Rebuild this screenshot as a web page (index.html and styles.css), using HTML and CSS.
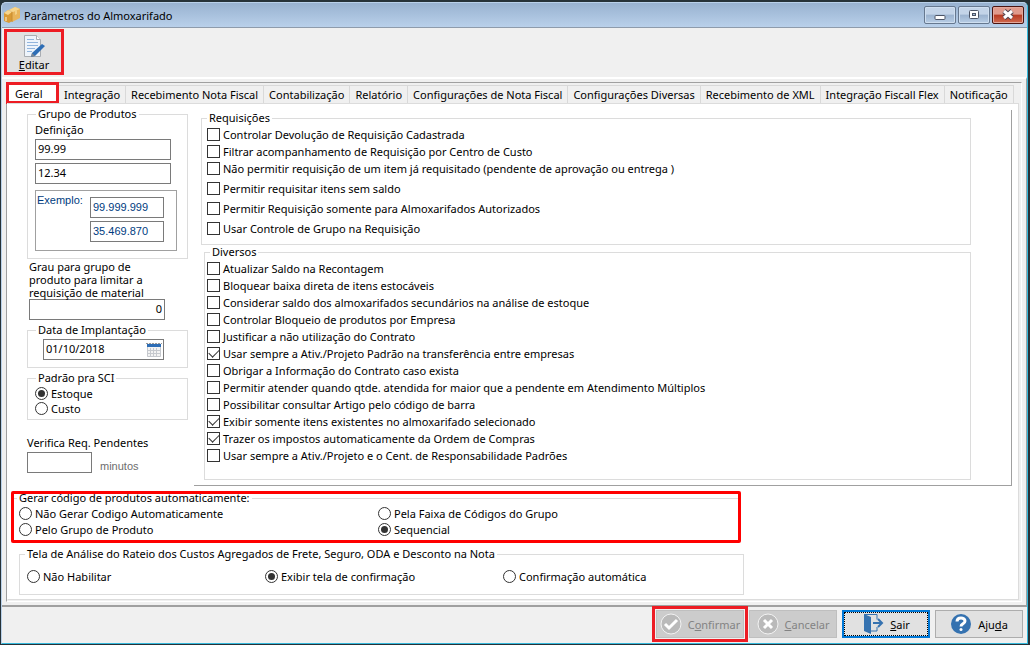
FILE: index.html
```html
<!DOCTYPE html>
<html lang="pt-BR">
<head>
  <meta charset="UTF-8">
  <meta name="viewport" content="width=device-width, initial-scale=1.0">
  <title>Parâmetros do Almoxarifado</title>
  <link rel="stylesheet" href="styles.css">
</head>
<body>
  <div class="window">
    <header class="titlebar">
      <svg class="app-icon" width="16" height="16" viewBox="0 0 16 16">
        <path d="M0 6l4-3 4 2v9l-3 2-5-2z" fill="#d99a35"/>
        <path d="M5 3l6-3 5 2v9l-8 4V5z" fill="#e9b45a"/>
        <path d="M0 6l4-3 4 2-4 3zM5 3l6-3 5 2-7 3z" fill="#f7d58c"/>
        <path d="M8 5v10" stroke="#c98c30" fill="none"/>
        <path d="M11 4v4l2-1V3" fill="#f3cf85"/>
        <path d="M1 11h2M1 13h2" stroke="#fff3d0"/>
      </svg>
      <h1>Parâmetros do Almoxarifado</h1>
      <div class="window-buttons">
        <button type="button" aria-label="Minimizar">
          <svg width="12" height="12" viewBox="0 0 12 12"><rect x="1" y="6.5" width="10" height="4" rx="1" fill="#fff" stroke="#4c5566"/></svg>
        </button>
        <button type="button" aria-label="Maximizar">
          <svg width="12" height="12" viewBox="0 0 12 12"><rect x="1.5" y="1.5" width="9" height="8" rx="1" fill="#fff" stroke="#4c5566"/><rect x="4.5" y="4.5" width="3" height="2" fill="#a9bfd8" stroke="#4c5566"/></svg>
        </button>
        <button type="button" class="close" aria-label="Fechar">
          <svg width="12" height="12" viewBox="0 0 12 12"><path d="M2 2l8 7M10 2l-8 7" stroke="#4c4450" stroke-width="5"/><path d="M2 2l8 7M10 2l-8 7" stroke="#fff" stroke-width="3"/></svg>
        </button>
      </div>
    </header>

    <div class="toolbar">
      <button type="button" class="edit-btn">
        <svg width="22" height="24" viewBox="0 0 22 24">
          <path d="M1.5 1.5h12l4 4v17h-16z" fill="#eef4fb" stroke="#a9adb2"/>
          <path d="M13.5 1.5v4h4" fill="#fff" stroke="#a9adb2"/>
          <path d="M4 5.5h7M4 8.5h11M4 11.500h11M4 14.5h8M4 17.5h5" stroke="#92b5dd"/>
          <path d="M19 10l3 2-10 10-4 1 1-4z" fill="#2d6db5"/>
          <path d="M8 23l1-4 3 3z" fill="#7b8592"/>
        </svg>
        <span><u>E</u>ditar</span>
      </button>
    </div>

    <main class="workspace">
      <div class="frame">
        <nav class="tabs">
          <button type="button" class="tab active">Geral</button>
          <button type="button" class="tab">Integração</button>
          <button type="button" class="tab">Recebimento Nota Fiscal</button>
          <button type="button" class="tab">Contabilização</button>
          <button type="button" class="tab">Relatório</button>
          <button type="button" class="tab">Configurações de Nota Fiscal</button>
          <button type="button" class="tab">Configurações Diversas</button>
          <button type="button" class="tab">Recebimento de XML</button>
          <button type="button" class="tab">Integração Fiscall Flex</button>
          <button type="button" class="tab">Notificação</button>
        </nav>

        <form class="page">
          <div class="columns">
            <div class="sidebar">
              <fieldset class="product-group">
                <legend>Grupo de Produtos</legend>
                <label for="definicao">Definição</label>
                <input type="text" id="definicao" value="99.99">
                <input type="text" aria-label="Exemplo da definição" value="12.34">
                <div class="sample">
                  <label for="exemplo">Exemplo:</label>
                  <div class="sample-fields">
                    <input type="text" id="exemplo" value="99.999.999">
                    <input type="text" aria-label="Exemplo de código" value="35.469.870">
                  </div>
                </div>
              </fieldset>

              <div class="level">
                <label for="grau">Grau para grupo de produto para limitar a requisição de material</label>
                <input type="text" id="grau" value="0">
              </div>

              <fieldset class="start-date">
                <legend>Data de Implantação</legend>
                <div class="date-field">
                  <input type="text" aria-label="Data de Implantação" value="01/10/2018">
                  <svg width="16" height="16" viewBox="0 0 16 16">
                    <rect x="1" y="1" width="14" height="14" fill="#f3f3f3"/>
                    <path d="M0 1.5h16" stroke="#999" stroke-dasharray="2 1"/>
                    <path d="M1 3.5h14" stroke="#2d6db5" stroke-width="3"/>
                    <path d="M1.5 5v9.5h13V5M4.5 6v8M7.5 6v8M10.5 6v8M2 8.5h12M2 11.500h12" stroke="#c6c9ce" fill="none"/>
                  </svg>
                </div>
              </fieldset>

              <fieldset class="sci">
                <legend>Padrão pra SCI</legend>
                <label class="option"><input type="radio" name="sci" checked>Estoque</label>
                <label class="option"><input type="radio" name="sci">Custo</label>
              </fieldset>

              <div class="pending">
                <label for="pendentes">Verifica Req. Pendentes</label>
                <div class="pending-row">
                  <input type="text" id="pendentes">
                  <span>minutos</span>
                </div>
              </div>
            </div>

            <div class="panel">
              <fieldset class="requests">
                <legend>Requisições</legend>
                <label class="option"><input type="checkbox">Controlar Devolução de Requisição Cadastrada</label>
                <label class="option"><input type="checkbox">Filtrar acompanhamento de Requisição por Centro de Custo</label>
                <label class="option"><input type="checkbox">Não permitir requisição de um item já requisitado (pendente de aprovação ou entrega )</label>
                <label class="option spaced"><input type="checkbox">Permitir requisitar itens sem saldo</label>
                <label class="option spaced"><input type="checkbox">Permitir Requisição somente para Almoxarifados Autorizados</label>
                <label class="option spaced"><input type="checkbox">Usar Controle de Grupo na Requisição</label>
              </fieldset>

              <fieldset class="misc">
                <legend>Diversos</legend>
                <label class="option"><input type="checkbox">Atualizar Saldo na Recontagem</label>
                <label class="option"><input type="checkbox">Bloquear baixa direta de itens estocáveis</label>
                <label class="option"><input type="checkbox">Considerar saldo dos almoxarifados secundários na análise de estoque</label>
                <label class="option"><input type="checkbox">Controlar Bloqueio de produtos por Empresa</label>
                <label class="option"><input type="checkbox">Justificar a não utilização do Contrato</label>
                <label class="option"><input type="checkbox" checked>Usar sempre a Ativ./Projeto Padrão na transferência entre empresas</label>
                <label class="option"><input type="checkbox">Obrigar a Informação do Contrato caso exista</label>
                <label class="option"><input type="checkbox">Permitir atender quando qtde. atendida for maior que a pendente em Atendimento Múltiplos</label>
                <label class="option"><input type="checkbox">Possibilitar consultar Artigo pelo código de barra</label>
                <label class="option"><input type="checkbox" checked>Exibir somente itens existentes no almoxarifado selecionado</label>
                <label class="option"><input type="checkbox" checked>Trazer os impostos automaticamente da Ordem de Compras</label>
                <label class="option"><input type="checkbox">Usar sempre a Ativ./Projeto e o Cent. de Responsabilidade Padrões</label>
              </fieldset>
            </div>
          </div>

          <div class="code-box">
            <fieldset class="code">
              <legend>Gerar código de produtos automaticamente:</legend>
              <div class="code-options">
                <label class="option"><input type="radio" name="codigo">Não Gerar Codigo Automaticamente</label>
                <label class="option"><input type="radio" name="codigo">Pela Faixa de Códigos do Grupo</label>
                <label class="option"><input type="radio" name="codigo">Pelo Grupo de Produto</label>
                <label class="option"><input type="radio" name="codigo" checked>Sequencial</label>
              </div>
            </fieldset>
          </div>

          <fieldset class="costs">
            <legend>Tela de Análise do Rateio dos Custos Agregados de Frete, Seguro, ODA e Desconto na Nota</legend>
            <div class="costs-options">
              <label class="option"><input type="radio" name="rateio">Não Habilitar</label>
              <label class="option"><input type="radio" name="rateio" checked>Exibir tela de confirmação</label>
              <label class="option"><input type="radio" name="rateio">Confirmação automática</label>
            </div>
          </fieldset>
        </form>
      </div>
    </main>

    <footer class="actions">
      <button type="button" class="action confirm" disabled>
        <svg width="22" height="22" viewBox="0 0 22 22"><circle cx="11" cy="11" r="10" fill="#bababa" stroke="#f2f2f2"/><path d="M5 11l4 4 8-8" fill="none" stroke="#fff" stroke-width="3"/></svg>
        <span>C<u>o</u>nfirmar</span>
      </button>
      <button type="button" class="action cancel" disabled>
        <svg width="22" height="22" viewBox="0 0 22 22"><circle cx="11" cy="11" r="10" fill="#bababa" stroke="#f2f2f2"/><path d="M7 7l8 8M15 7l-8 8" stroke="#fff" stroke-width="3"/></svg>
        <span><u>C</u>ancelar</span>
      </button>
      <button type="button" class="action exit">
        <svg width="22" height="22" viewBox="0 0 22 22"><path d="M2 1l7 3v17l-7-3z" fill="#3572b0"/><path d="M2 1.5h13v5M15 14v4H9" fill="none" stroke="#3572b0"/><path d="M11 10h9M16 6l4 4-4 4" fill="none" stroke="#3572b0" stroke-width="2"/></svg>
        <span><u>S</u>air</span>
      </button>
      <button type="button" class="action help">
        <svg width="22" height="22" viewBox="0 0 22 22"><circle cx="11" cy="11" r="10" fill="#3572b0"/><path d="M7 8.5c0-5 8-4.5 8-.5 0 3-4 2.500-4 5.500" fill="none" stroke="#fff" stroke-width="3"/><circle cx="11" cy="16.500" r="1.500" fill="#fff"/></svg>
        <span>Aju<u>d</u>a</span>
      </button>
    </footer>
  </div>
</body>
</html>
```

FILE: styles.css
```css
* {
  box-sizing: border-box;
}

body {
  display: flex;
  min-height: 100vh;
  margin: 0;
  padding: 2px 2px 1px 1px;
  background-color: #263238;
  color: #000;
  font-family: "Noto Sans", "Open Sans", sans-serif;
  font-size: 11px;
  line-height: 13px;
}

button,
input {
  font: inherit;
  color: inherit;
}

button {
  padding: 0;
}

svg {
  display: block;
  flex: none;
}

.window {
  flex: 1;
  display: flex;
  flex-direction: column;
  min-width: 0;
  border: 1px solid #b9d1ea;
  border-right-color: #35b9dc;
  border-bottom-color: #35b9dc;
  border-radius: 5px 5px 0 0;
  background-color: #f0f0f0;
  overflow: hidden;
}

/* title bar */
.titlebar {
  display: flex;
  align-items: center;
  height: 25px;
  padding: 0 3px 0 2px;
  border-bottom: 1px solid #8e9bab;
  background: linear-gradient(#98b2d0, #b9d0ea);
}

.titlebar h1 {
  flex: 1;
  margin: 0 0 0 4px;
  font-size: 11px;
  font-weight: normal;
}

.window-buttons {
  display: flex;
  gap: 2px;
}

.window-buttons button {
  display: flex;
  align-items: center;
  justify-content: center;
  width: 32px;
  height: 18px;
  border: 1px solid #66788f;
  border-radius: 2px;
  background: linear-gradient(#c3d4e8 45%, #9bb3cf 50%, #b8cde5);
  box-shadow: inset 0 0 0 1px #cfdff0;
}

.window-buttons .close {
  border-color: #4c1410;
  background: linear-gradient(#e09a8c 45%, #b83a22 50%, #d06a50);
  box-shadow: inset 0 0 0 1px #e3a89c;
}

/* toolbar */
.toolbar {
  height: 49px;
  padding: 1px 2px;
}

.edit-btn {
  display: flex;
  flex-direction: column;
  align-items: center;
  justify-content: flex-end;
  width: 60px;
  height: 46px;
  padding-bottom: 1px;
  border: 3px solid #ed1c24;
  background-color: #e1e1e1;
}

/* tabs */
.workspace {
  flex: 1;
  display: flex;
  padding: 3px 4px;
  border-top: 2px solid #fff;
  border-right: 1px solid #a0a0a0;
}

.frame {
  flex: 1;
  display: flex;
  flex-direction: column;
  min-width: 0;
  padding: 2px 2px 1px 0;
  border: 1px solid #fff;
  border-top-color: #a0a0a0;
  border-left-color: #a0a0a0;
}

.tabs {
  display: flex;
  align-items: flex-start;
  padding-left: 2px;
}

.tab {
  height: 18px;
  padding: 0 5px;
  border: 0;
  border-top: 1px solid #d9d9d9;
  border-right: 1px solid #d9d9d9;
  background-color: #f0f0f0;
  white-space: nowrap;
}

.tab.active {
  width: 47px;
  height: 16px;
  margin-right: 3px;
  padding: 0 6px;
  border: 0;
  background-color: #fff;
  text-align: left;
  outline: 3px solid #ed1c24;
}

.page {
  flex: 1;
  padding-bottom: 4px;
  border: 1px solid #dcdcdc;
  border-left: 1px solid #fff;
  background-color: #fff;
}

/* form parts */
fieldset {
  min-width: 0;
  margin: 0;
  padding: 0;
  border: 1px solid #dcdcdc;
}

legend {
  margin-left: 8px;
  padding: 0 2px;
  line-height: 14px;
}

input[type="text"] {
  display: block;
  width: 136px;
  height: 21px;
  padding: 0 2px 2px;
  border: 1px solid #7a7a7a;
  background-color: #fff;
}

.option {
  display: flex;
  align-items: center;
  gap: 3px;
  height: 17px;
}

.spaced {
  margin-top: 3px;
}

input[type="checkbox"],
input[type="radio"] {
  appearance: none;
  display: grid;
  place-items: center;
  flex: none;
  width: 13px;
  height: 13px;
  margin: 0;
  border: 1px solid #333;
  background-color: #fff;
}

input[type="radio"] {
  border-radius: 50%;
}

input[type="radio"]:checked::before {
  content: "";
  width: 7px;
  height: 7px;
  border-radius: 50%;
  background-color: #333;
}

input[type="checkbox"]:checked::before {
  content: "";
  width: 9px;
  height: 5px;
  margin-bottom: 3px;
  border-left: 1px solid #333;
  border-bottom: 1px solid #333;
  transform: rotate(-45deg);
}

.columns {
  display: grid;
  grid-template-columns: 161px 1fr;
  gap: 6px;
  padding: 0 6px 0 19px;
}

/* left column */
.sidebar label {
  display: block;
}

.sidebar .option {
  display: flex;
}

.product-group {
  margin-top: 3px;
  padding: 2px 7px 7px;
}

.product-group legend {
  margin-left: 1px;
}

.product-group input {
  margin-top: 3px;
}

.sample {
  display: flex;
  justify-content: space-between;
  width: 142px;
  height: 61px;
  margin-top: 6px;
  padding: 3px 12px 0 1px;
  border: 1px solid #a0a0a0;
  color: #003c80;
  font-family: "Liberation Sans", Arial, sans-serif;
}

.sample-fields input[type="text"] {
  width: 74px;
}

.level {
  padding: 1px 20px 0 2px;
}

.level input {
  text-align: right;
}

.start-date {
  margin-top: 3px;
  padding: 2px 15px 7px;
}

.start-date legend {
  margin-left: -7px;
}

.date-field {
  display: flex;
  align-items: center;
  width: 121px;
  height: 21px;
  padding-right: 1px;
  border: 1px solid #7a7a7a;
}

.date-field input[type="text"] {
  flex: 1;
  width: 0;
  height: 19px;
  border: 0;
}

.sci {
  margin-top: 3px;
  padding: 1px 7px 3px;
}

.sci legend {
  margin-left: 1px;
}

.sci .option {
  height: 15px;
}

.pending {
  margin-top: 16px;
}

.pending-row {
  display: flex;
  align-items: flex-end;
  gap: 8px;
  margin-top: 3px;
}

.pending-row input[type="text"] {
  width: 65px;
}

.pending-row span {
  color: #6d6d6d;
  font-family: "Liberation Sans", Arial, sans-serif;
}

/* right panel */
.panel {
  margin-top: 6px;
  padding: 1px 40px 5px 7px;
  border-right: 1px solid #a0a0a0;
  border-bottom: 1px solid #a0a0a0;
}

.requests {
  padding: 1px 5px 7px;
}

.requests legend {
  margin-left: 0;
}

.misc {
  margin-left: 3px;
  padding: 1px 2px 15px;
}

.misc legend {
  margin-left: 3px;
}

/* product code generation */
.code-box {
  max-width: 730px;
  margin: 5px 0 0 3px;
  padding: 0 3px;
  border-radius: 2px;
  box-shadow: inset 0 0 0 3px #f00;
}

.code {
  padding: 0 5px 6px;
  border-width: 1px 0 0;
}

.code legend {
  margin-left: -2px;
}

.code-options {
  display: grid;
  grid-template-columns: 359px 1fr;
}

.code .option {
  height: 16px;
}

/* cost sharing */
.costs {
  max-width: 725px;
  margin: 4px 0 0 11px;
  padding: 7px 7px 9px;
}

.costs legend {
  margin-left: -2px;
}

.costs-options {
  display: grid;
  grid-template-columns: repeat(3, 238px);
}

/* bottom buttons */
.actions {
  display: flex;
  justify-content: flex-end;
  gap: 5px;
  padding: 3px 4px 5px;
  border-top: 2px solid #a0a0a0;
}

.action {
  display: flex;
  align-items: center;
  justify-content: center;
  gap: 6px;
  width: 88px;
  height: 28px;
  border: 1px solid #adadad;
  background-color: #e1e1e1;
}

.action:disabled {
  border-color: #bfbfbf;
  background-color: #ccc;
  color: #838383;
}

.confirm {
  outline: 3px solid #ed1c24;
  outline-offset: 1px;
}

.exit {
  border: 2px solid #0078d7;
  outline: 1px dotted #000;
  outline-offset: -3px;
}
```
